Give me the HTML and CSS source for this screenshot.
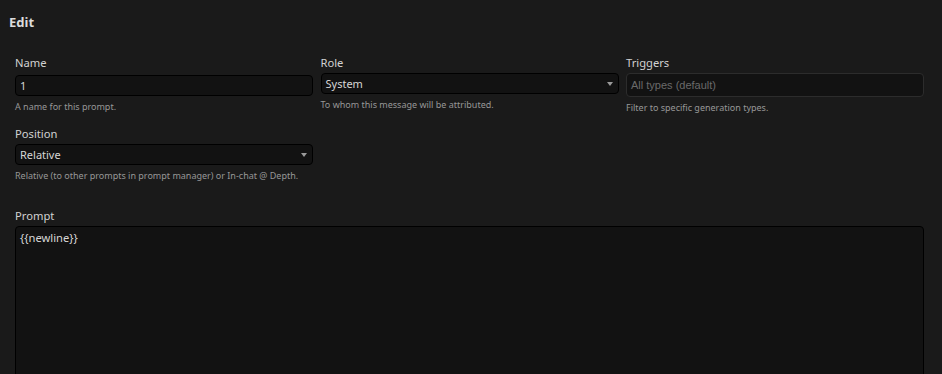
FILE: index.html
```html
<!DOCTYPE html>
<html lang="en">
<head>
    <meta charset="UTF-8">
    <title>Edit Prompt</title>
    <link rel="stylesheet" href="styles.css">
</head>
<body>
    <div class="editor">
        <h3 class="title">Edit</h3>

        <div class="row">
            <div class="field">
                <label for="name">Name</label>
                <input type="text" id="name" class="text" value="1">
                <small>A name for this prompt.</small>
            </div>
            <div class="field">
                <label>Role</label>
                <div class="select">System<span class="caret"></span></div>
                <small>To whom this message will be attributed.</small>
            </div>
            <div class="field">
                <label>Triggers</label>
                <div class="multi">All types (default)</div>
                <small>Filter to specific generation types.</small>
            </div>
        </div>

        <div class="row">
            <div class="field">
                <label>Position</label>
                <div class="select">Relative<span class="caret"></span></div>
                <small>Relative (to other prompts in prompt manager) or In-chat @ Depth.</small>
            </div>
        </div>

        <div class="prompt">
            <label for="prompt">Prompt</label>
            <textarea id="prompt" class="area">{{newline}}</textarea>
        </div>
    </div>
</body>
</html>
```

FILE: styles.css
```css
*{
    box-sizing: border-box;
    margin: 0;
}
body{
    background-color: #1a1a1a;
    font-family: "Noto Sans", sans-serif;
    color: #d0d0d0;
    overflow: hidden;
}
.editor{
    padding: 13px 18px 0 15px;
}
.title{
    font-size: 13px;
    font-weight: 700;
    color: #dcdcdc;
    margin-left: -6px;
    line-height: 18px;
}
.row{
    display: grid;
    grid-template-columns: repeat(3, 1fr);
    column-gap: 7.5px;
    margin-top: 23px;
}
.row + .row{
    margin-top: 11px;
}
.field label, .prompt label{
    display: block;
    font-size: 11.2px;
    line-height: 17px;
    margin-bottom: 2px;
    color: #d2d2d2;
}
.text, .select, .multi, .area{
    width: 100%;
    background-color: #121212;
    border: 1px solid #000;
    border-radius: 4px;
    color: #d6d6d6;
    font-family: "Noto Sans", sans-serif;
    font-size: 11px;
    outline: none;
}
.text, .select{
    height: 21px;
    padding: 0 4px;
    line-height: 19px;
}
.select{
    position: relative;
}
.caret{
    position: absolute;
    right: 5px;
    top: 8px;
    border-left: 3px solid transparent;
    border-right: 3px solid transparent;
    border-top: 4px solid #9a9a9a;
}
.multi{
    height: 24px;
    padding: 0 4px;
    line-height: 22px;
    border-color: #2c2c2c;
    color: #6a6a6a;
    font-family: "Liberation Sans", sans-serif;
}
.field small{
    display: block;
    font-size: 9px;
    line-height: 12px;
    margin-top: 5px;
    color: #979797;
}
.prompt{
    margin-top: 25px;
}
.area{
    display: block;
    height: 200px;
    padding: 2px 4px;
    resize: none;
    font-size: 11.2px;
    line-height: 17px;
}
```
